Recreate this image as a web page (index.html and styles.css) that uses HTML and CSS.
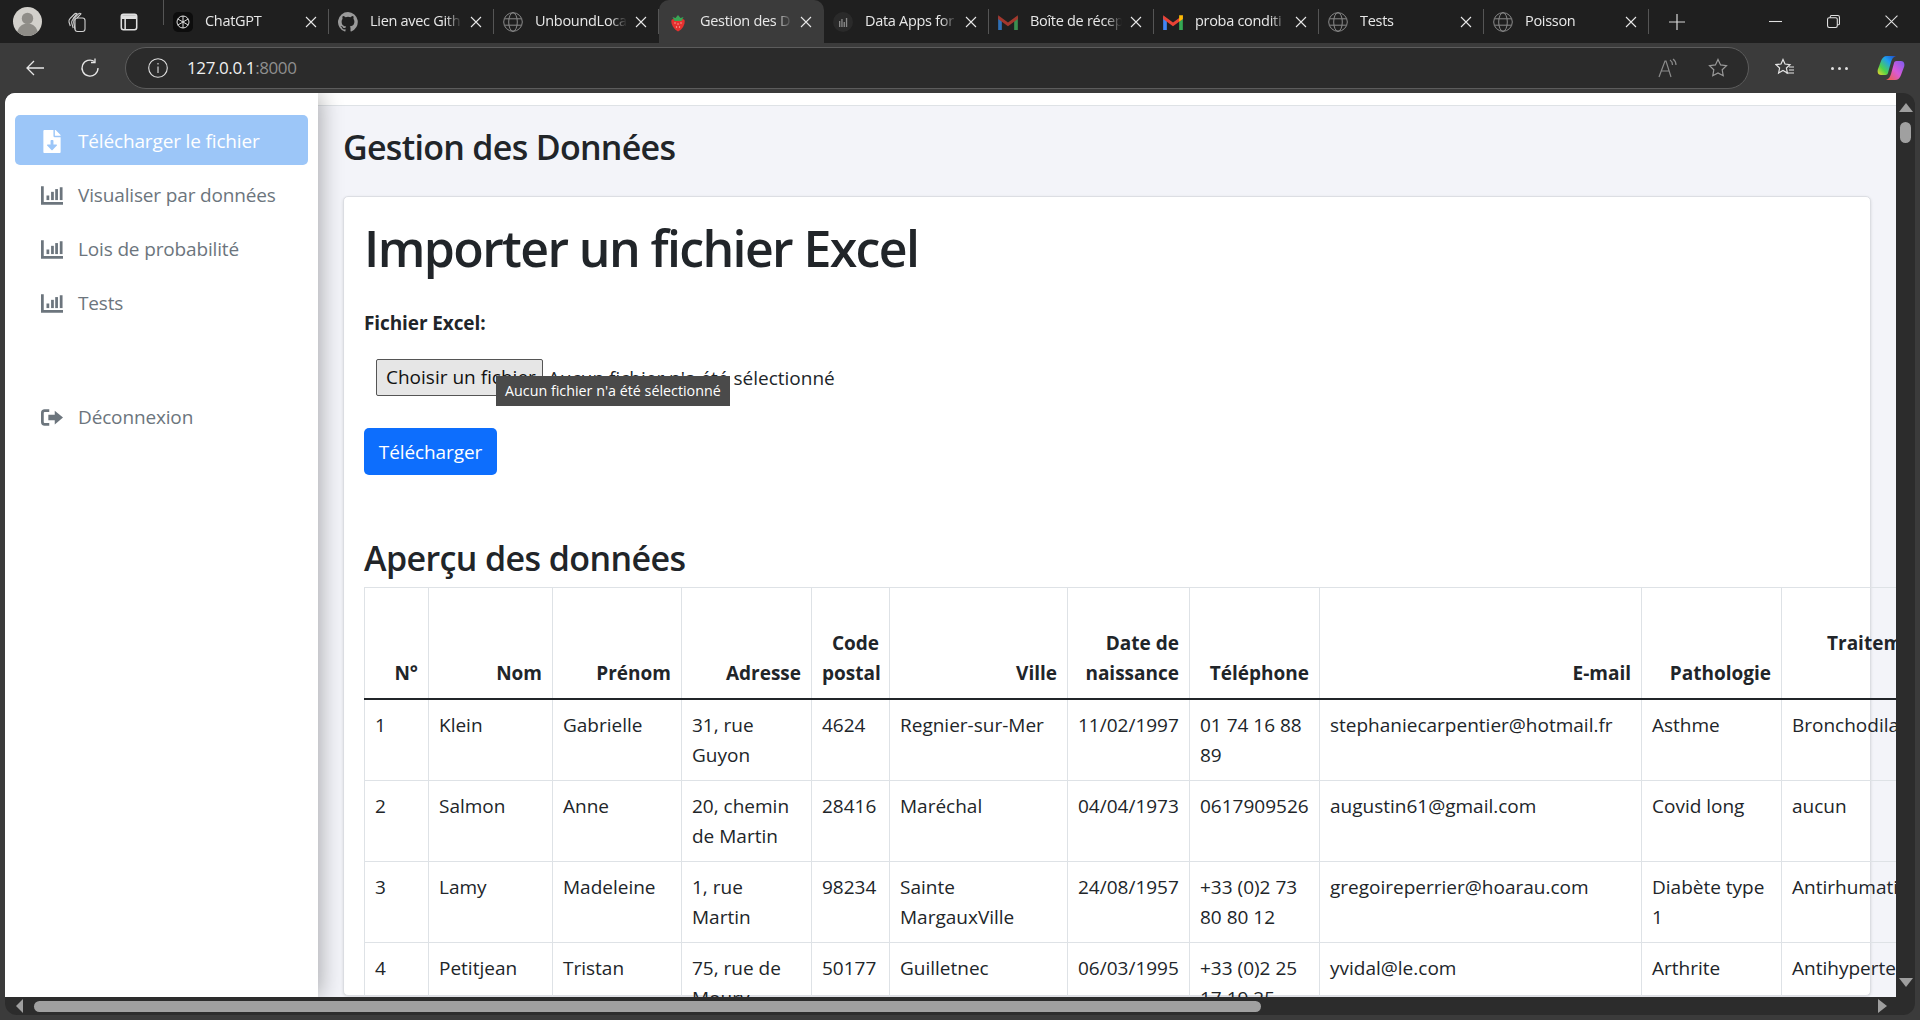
FILE: index.html
```html
<!DOCTYPE html>
<html lang="fr">
<head>
<meta charset="utf-8">
<title>Gestion des Données</title>
<link rel="stylesheet" href="styles.css">
</head>
<body>
<svg class="defs" width="0" height="0" aria-hidden="true"><defs>
  <symbol id="x" viewBox="0 0 12 12"><path d="M1 1l10 10M11 1L1 11" stroke="#e8e8e8" stroke-width="1.100" fill="none"/></symbol>
  <symbol id="globe" viewBox="0 0 20 20"><g fill="none" stroke="#8a8a8a" stroke-width="1"><circle cx="10" cy="10" r="9.300"/><ellipse cx="10" cy="10" rx="4.300" ry="9.300"/><path d="M1.500 6.800h17M1.500 13.200h17"/></g></symbol>
  <symbol id="bars" viewBox="0 0 24 20"><path d="M0 0h3v17h21v3H0z" fill="#6c757d"/><g fill="#6c757d"><rect x="6" y="10" width="3" height="5"/><rect x="11" y="6" width="3" height="9"/><rect x="15.500" y="3" width="3" height="12"/><rect x="20.500" y="1" width="3" height="14"/></g></symbol>
</defs></svg>
<div class="window">
  <div class="tabstrip">
    <div class="strip-tools">
      <svg class="avatar" viewBox="0 0 28 28"><circle cx="14" cy="14" r="14" fill="#d2d0cb"/><circle cx="14" cy="11" r="5.500" fill="#8f8d88"/><path d="M4 24c2-6 6-8 10-8s8 2 10 8a14 14 0 0 1-20 0z" fill="#8f8d88"/></svg>
      <svg class="tool" viewBox="0 0 22 22" fill="none" stroke="#d0d0d0" stroke-width="1.100"><rect x="9" y="7" width="10" height="13.500" rx="2.500"/><path d="M9 8.500c-1 .4-1.500 1.500-1.300 2.800l1.300 7"/><path d="M11 7l4-4.200c-.8-.7-1.700-.7-2.500 0L6.800 8.500C5.800 9.600 5.500 10.500 5.700 12l1.500 5"/><path d="M7 7.500l4-4.700c-.8-.6-1.700-.5-2.500.2L4 7.700C3 8.800 2.800 9.800 3 11l1.300 4"/></svg>
      <svg class="tool last" viewBox="0 0 20 20" fill="none" stroke="#e0e0e0" stroke-width="1.400"><rect x="3" y="3" width="14" height="14" rx="2"/><path d="M6.500 7v10"/><path d="M3 5.500h14" stroke-width="3.500"/></svg>
    </div>
    <div class="tab"><span class="fav dark"><svg viewBox="0 0 20 20" fill="none" stroke="#ddd" stroke-width="1"><circle cx="10" cy="10" r="6"/><path d="M10 4v12M4.800 7l10.400 6M15.200 7L4.800 13"/></svg></span><span class="tab-title">ChatGPT</span><svg class="tab-x"><use href="#x"/></svg></div>
    <div class="tab"><span class="fav"><svg viewBox="0 0 16 16" fill="#9a9a9a"><path d="M8 0a8 8 0 0 0-2.500 15.600c.4.100.5-.2.5-.4v-1.400c-2.200.5-2.700-1-2.700-1-.4-.9-.9-1.200-.9-1.200-.7-.5.100-.5.100-.5.800.100 1.200.8 1.200.8.700 1.200 1.900.9 2.300.7.100-.5.300-.9.500-1.100-1.800-.2-3.600-.9-3.600-4 0-.9.300-1.600.800-2.100-.1-.2-.4-1 .1-2.100 0 0 .7-.2 2.200.8a7.600 7.600 0 0 1 4 0c1.500-1 2.200-.8 2.200-.8.500 1.100.2 1.900.1 2.100.5.600.8 1.300.8 2.100 0 3.100-1.900 3.700-3.700 3.900.3.300.6.800.6 1.500v2.200c0 .2.100.5.600.4A8 8 0 0 0 8 0z"/></svg></span><span class="tab-title">Lien avec Gith</span><svg class="tab-x"><use href="#x"/></svg></div>
    <div class="tab"><span class="fav"><svg><use href="#globe"/></svg></span><span class="tab-title">UnboundLoca</span><svg class="tab-x"><use href="#x"/></svg></div>
    <div class="tab active"><span class="fav"><svg viewBox="0 0 16 20"><path d="M1.500 8c2-2 11-2 13 0 1 4-2 9.500-6.500 11.500C4 17.500.5 12 1.500 8z" fill="#e5312f"/><path d="M2.500 5l3 1 2.500-3 2.500 3 3-1-2 4H4.500z" fill="#3aa655"/><g fill="#ffb3a8"><circle cx="5" cy="11" r=".7"/><circle cx="8" cy="12" r=".7"/><circle cx="11" cy="11" r=".7"/><circle cx="6.500" cy="15" r=".7"/><circle cx="9.500" cy="15" r=".7"/></g></svg></span><span class="tab-title">Gestion des D</span><svg class="tab-x"><use href="#x"/></svg></div>
    <div class="tab"><span class="fav dark2"><svg viewBox="0 0 20 20" fill="#8a8a8a"><rect x="6" y="9" width="1.300" height="6"/><rect x="8.300" y="7" width="1.300" height="8"/><rect x="10.600" y="10" width="1.300" height="5"/><rect x="12.900" y="6" width="1.300" height="9"/></svg></span><span class="tab-title">Data Apps for</span><svg class="tab-x"><use href="#x"/></svg></div>
    <div class="tab"><span class="fav mail"><svg viewBox="0 0 16 13"><path d="M0 2v11h3V5z" fill="#2f6fb5"/><path d="M13 5v8h3V2z" fill="#3b8e50"/><path d="M0 1l8 6 8-6v3L8 10 0 4z" fill="#a3372d"/></svg></span><span class="tab-title">Boîte de récep</span><svg class="tab-x"><use href="#x"/></svg></div>
    <div class="tab"><span class="fav mail"><svg viewBox="0 0 16 13"><path d="M0 2v11h3V5z" fill="#4285f4"/><path d="M13 5v8h3V2z" fill="#34a853"/><path d="M0 1l8 6 8-6v3L8 10 0 4z" fill="#ea4335"/><path d="M13 1h3v3l-3 2z" fill="#fbbc04"/></svg></span><span class="tab-title">proba conditi</span><svg class="tab-x"><use href="#x"/></svg></div>
    <div class="tab"><span class="fav"><svg><use href="#globe"/></svg></span><span class="tab-title">Tests</span><svg class="tab-x"><use href="#x"/></svg></div>
    <div class="tab"><span class="fav"><svg><use href="#globe"/></svg></span><span class="tab-title">Poisson</span><svg class="tab-x"><use href="#x"/></svg></div>
    <svg class="new-tab" viewBox="0 0 16 16" stroke="#d8d8d8" stroke-width="1.200"><path d="M8 0v16M0 8h16"/></svg>
    <div class="win-controls">
      <svg viewBox="0 0 12 12" stroke="#e0e0e0" fill="none"><path d="M0 6h12"/></svg>
      <svg viewBox="0 0 12 12" stroke="#e0e0e0" fill="none"><rect x=".5" y="2.500" width="9" height="9" rx="1.500"/><path d="M3 2.500V1.500a1 1 0 0 1 1-1h6a1.500 1.500 0 0 1 1.500 1.500v6a1 1 0 0 1-1 1h-1"/></svg>
      <svg viewBox="0 0 12 12" stroke="#e0e0e0" fill="none"><path d="M.5.500l11 11M11.500.500l-11 11"/></svg>
    </div>
  </div>
  <div class="toolbar">
    <svg class="nav-ico" viewBox="0 0 20 20" fill="none" stroke="#e6e6e6" stroke-width="1.300"><path d="M19 10H2M9 3l-7 7 7 7"/></svg>
    <svg class="nav-ico reload" viewBox="0 0 20 20" fill="none" stroke="#e6e6e6" stroke-width="1.300"><path d="M14.500 3.500A8 8 0 1 0 18 10"/><path d="M15 .500v4h-4"/></svg>
    <div class="omnibox">
      <svg class="info" viewBox="0 0 20 20" fill="none" stroke="#e0e0e0" stroke-width="1.100"><circle cx="10" cy="10" r="9.300"/><path d="M10 8.500v6.500M10 5v1.500"/></svg>
      <span class="url">127.0.0.1<span class="port">:8000</span></span>
      <span class="omni-right">
        <svg class="omni-ico" viewBox="0 0 20 20" fill="none" stroke="#8b8b8b" stroke-width="1.200"><path d="M1 19L7 3h1l5 16M3.500 13h8M12 2c1.500 1 2.500 3 2.500 5M15 1c2 1.500 3 3.500 3 6"/></svg>
        <svg class="omni-ico" viewBox="0 0 20 20" fill="none" stroke="#9a9a9a" stroke-width="1.200"><path d="M10 1.500l2.600 5.400 5.900.8-4.300 4.100 1 5.900-5.200-2.800-5.200 2.800 1-5.900L1.500 7.700l5.900-.8z"/></svg>
      </span>
    </div>
    <svg class="omni-ico fav-list" viewBox="0 0 20 20" fill="none" stroke="#e6e6e6" stroke-width="1.200"><path d="M8 1.500l2 4.500 5 .6-3.600 3.400 1 5-4.400-2.500L3.600 15l1-5L1 6.600 6 6zM14 9h5M14 12h5M11 15h8"/></svg>
    <span class="dots"><i></i><i></i><i></i></span>
    <svg class="copilot" viewBox="0 0 28 26"><defs><linearGradient id="cg1" x1="1" y1="0" x2="0" y2="1"><stop offset="0" stop-color="#1f48c8"/><stop offset=".35" stop-color="#1f9df0"/><stop offset=".7" stop-color="#4ed24a"/><stop offset="1" stop-color="#f5d52a"/></linearGradient><linearGradient id="cg2" x1="1" y1="0" x2="0" y2="1"><stop offset="0" stop-color="#7a5cf0"/><stop offset=".5" stop-color="#d85ad8"/><stop offset="1" stop-color="#f0603a"/></linearGradient></defs><path d="M10 1H19C16 2 15 4 14 7L11 18C10.500 20 9 20 7 20H4C1 20 0 17 1 14L4 6C5 3 7 1 10 1Z" fill="url(#cg1)"/><path d="M18 25H9C12 24 13 22 14 19L17 8C17.500 6 19 6 21 6H24C27 6 28 9 27 12L24 20C23 23 21 25 18 25Z" fill="url(#cg2)"/></svg>
  </div>
  <div class="frame">
    <div class="content-row">
      <div class="viewport">
        <aside class="sidebar">
          <nav class="side-nav">
            <a class="side-link current"><svg class="side-ico doc" viewBox="0 0 384 512" fill="#fff"><path d="M224 136V0H24C10.700 0 0 10.700 0 24v464c0 13.300 10.700 24 24 24h336c13.300 0 24-10.700 24-24V160H248c-13.200 0-24-10.800-24-24zm76.400 211.400l-96.400 95.700c-6.600 6.600-17.300 6.600-24 0l-96.400-95.700C73.400 337.300 80.500 320 94.800 320H160v-80c0-8.800 7.200-16 16-16h32c8.800 0 16 7.200 16 16v80h65.200c14.300 0 21.400 17.300 11.200 27.400zM377 105L279.100 7c-4.500-4.500-10.600-7-17-7H256v128h128v-6.100c0-6.300-2.500-12.400-7-16.900z"/></svg><span>Télécharger le fichier</span></a>
            <a class="side-link"><svg class="side-ico"><use href="#bars"/></svg><span>Visualiser par données</span></a>
            <a class="side-link"><svg class="side-ico"><use href="#bars"/></svg><span>Lois de probabilité</span></a>
            <a class="side-link"><svg class="side-ico"><use href="#bars"/></svg><span>Tests</span></a>
            <a class="side-link logout"><svg class="side-ico" viewBox="0 0 24 20" fill="#6c757d"><path d="M15 2.500l9 7.500-9 7.500V13H8V7h7z"/><path d="M9 1H4a4 4 0 0 0-4 4v10a4 4 0 0 0 4 4h5v-3H4a1 1 0 0 1-1-1V5a1 1 0 0 1 1-1h5z"/></svg><span>Déconnexion</span></a>
          </nav>
        </aside>
        <div class="page">
          <div class="page-band"></div>
          <header class="page-head"><h2 class="page-title">Gestion des Données</h2></header>
          <section class="card">
            <h1 class="card-title">Importer un fichier Excel</h1>
            <form class="upload">
              <label class="field-label">Fichier Excel:</label>
              <div class="file-row">
                <span class="file-btn">Choisir un fichier</span>
                <span class="file-text">Aucun fichier n'a été sélectionné</span>
                <span class="tooltip">Aucun fichier n'a été sélectionné</span>
              </div>
              <button type="button" class="btn-primary">Télécharger</button>
            </form>
            <h2 class="section-title">Aperçu des données</h2>
            <table class="data">
              <thead>
                <tr><th class="c1">N°</th><th class="c2">Nom</th><th class="c3">Prénom</th><th class="c4">Adresse</th><th class="c5">Code postal</th><th class="c6">Ville</th><th class="c7">Date de naissance</th><th class="c8">Téléphone</th><th class="c9">E-mail</th><th class="c10">Pathologie</th><th class="c11"><span class="th-lift">Traitement</span></th></tr>
              </thead>
              <tbody>
                <tr><td>1</td><td>Klein</td><td>Gabrielle</td><td>31, rue Guyon</td><td>4624</td><td>Regnier-sur-Mer</td><td>11/02/1997</td><td>01 74 16 88 89</td><td>stephaniecarpentier@hotmail.fr</td><td>Asthme</td><td>Bronchodilatateur</td></tr>
                <tr><td>2</td><td>Salmon</td><td>Anne</td><td>20, chemin de Martin</td><td>28416</td><td>Maréchal</td><td>04/04/1973</td><td>0617909526</td><td>augustin61@gmail.com</td><td>Covid long</td><td>aucun</td></tr>
                <tr><td>3</td><td>Lamy</td><td>Madeleine</td><td>1, rue Martin</td><td>98234</td><td>Sainte MargauxVille</td><td>24/08/1957</td><td>+33 (0)2 73 80 80 12</td><td>gregoireperrier@hoarau.com</td><td>Diabète type 1</td><td>Antirhumatismal</td></tr>
                <tr><td>4</td><td>Petitjean</td><td>Tristan</td><td>75, rue de Moury</td><td>50177</td><td>Guilletnec</td><td>06/03/1995</td><td>+33 (0)2 25 17 19 25</td><td>yvidal@le.com</td><td>Arthrite</td><td>Antihypertenseur</td></tr>
              </tbody>
            </table>
          </section>
        </div>
      </div>
      <div class="v-scroll"><span class="arrow-up"></span><span class="v-thumb"></span><span class="arrow-down"></span></div>
    </div>
    <div class="h-scroll"><span class="arrow-left"></span><span class="h-thumb"></span><span class="arrow-right"></span></div>
  </div>
</div>
</body>
</html>
```
FILE: styles.css
```css
* { box-sizing: border-box; }
html, body { margin: 0; height: 100%; overflow: hidden; }
body { background: #3b3b3b; font-family: "Open Sans", "Noto Sans", sans-serif; color: #212529; }
.defs { position: absolute; }
.window { width: 1920px; height: 1020px; display: flex; flex-direction: column; background: #3b3b3b; }

.tabstrip { height: 43px; flex: none; background: #1f1f1f; display: flex; align-items: center; color: #e8e8e8; }
.strip-tools { width: 164px; flex: none; display: flex; align-items: center; padding-left: 13px; position: relative; }
.strip-tools::after { content: ""; position: absolute; right: 0; top: -7px; height: 25px; width: 1px; background: #555; }
.avatar { width: 29px; height: 29px; margin-right: 24px; flex: none; }
.tool { width: 22px; height: 22px; margin-right: 30px; flex: none; }
.tool.last { margin-right: 0; }
.tab { width: 165px; height: 43px; flex: none; display: flex; align-items: center; padding: 0 12px 0 9px; position: relative; }
.tab::after { content: ""; position: absolute; right: 0; top: 9px; height: 25px; width: 1px; background: #555; }
.tab.active { background: #3b3b3b; border-radius: 10px 10px 0 0; }
.tab.active::after { display: none; }
.fav { width: 20px; height: 20px; flex: none; display: flex; margin-right: 12px; }
.fav svg { width: 100%; height: 100%; }
.fav.dark { background: #0d0d0d; border-radius: 5px; }
.fav.dark2 { border-radius: 50%; background: #2a2a2a; }
.fav.mail { height: 16px; }
.tab-title { flex: 1; min-width: 0; margin: -2px 8px 0 0; overflow: hidden; white-space: nowrap; font-size: 14.500px; letter-spacing: -.3px; -webkit-mask-image: linear-gradient(90deg, #000 82%, transparent 100%); mask-image: linear-gradient(90deg, #000 82%, transparent 100%); }
.tab-x { width: 12px; height: 12px; flex: none; }
.new-tab { width: 16px; height: 16px; margin-left: 20px; flex: none; }
.win-controls { margin-left: auto; display: flex; gap: 45px; padding-right: 22px; }
.win-controls svg { width: 13px; height: 13px; }

.toolbar { height: 50px; flex: none; background: #3b3b3b; display: flex; align-items: center; padding: 0 0 0 25px; position: relative; }
.nav-ico { width: 20px; height: 20px; flex: none; margin-right: 35px; }
.nav-ico.reload { margin-right: 25px; }
.omnibox { width: 1624px; height: 42px; flex: none; border: 1px solid #5c5c5c; border-radius: 21px; background: #2b2b2b; display: flex; align-items: center; padding: 0 20px 0 22px; }
.info { width: 20px; height: 20px; margin-right: 19px; flex: none; }
.url { font-size: 17px; color: #f0f0f0; letter-spacing: -.4px; margin-top: -2px; }
.port { color: #8f8f8f; }
.omni-right { margin-left: auto; display: flex; gap: 30px; }
.omni-ico { width: 20px; height: 20px; flex: none; }
.fav-list { margin-left: 26px; }
.dots { display: flex; gap: 4px; margin-left: 36px; flex: none; }
.dots i { width: 3px; height: 3px; background: #e0e0e0; border-radius: 50%; }
.copilot { width: 28px; height: 26px; margin-left: 29px; flex: none; }

.frame { width: 1910px; height: 922px; margin-left: 5px; flex: none; background: #2c2c2c; border-radius: 10px 12px 12px 12px; overflow: hidden; display: flex; flex-direction: column; }
.content-row { height: 904px; flex: none; display: flex; }
.viewport { width: 1891px; height: 904px; overflow: hidden; display: flex; background: #f3f4f9; }
.sidebar { width: 313px; flex: none; background: #fff; padding: 22px 10px; box-shadow: 2px 0 22px rgba(0,0,0,.32); position: relative; z-index: 1; }
.side-nav { display: flex; flex-direction: column; gap: 4px; }
.side-link { height: 50px; display: flex; align-items: center; padding: 2px 0 0 26px; border-radius: 5px; font-size: 19px; letter-spacing: -.15px; color: #6c757d; }
.side-link.current { background: #9cc6f8; color: #fff; }
.side-link.logout { margin-top: 60px; }
.side-ico { width: 22px; height: 19px; margin-right: 15px; flex: none; }
.side-ico.doc { height: 23px; }

.page { flex: 1; min-width: 0; }
.page-band { height: 13px; background: #fff; border-bottom: 1px solid #dee2e6; }
.page-head { height: 90px; padding-left: 25px; display: flex; align-items: center; }
.page-title { margin: 0 0 8px; font-size: 34px; font-weight: 600; color: #212529; letter-spacing: -.7px; }
.card { margin-left: 25px; width: 1528px; height: 800px; background: #fff; border: 1px solid #dcdee3; border-radius: 5px; padding: 21px 20px 20px; box-shadow: 0 1px 3px rgba(0,0,0,.12); }
.card-title { margin: 0; font-size: 50px; line-height: 60px; font-weight: 600; letter-spacing: -1.620px; }
.upload { display: flex; flex-direction: column; align-items: flex-start; }
.field-label { margin-top: 30px; font-size: 19px; line-height: 30px; font-weight: 700; letter-spacing: -.1px; }
.file-row { margin-top: 21px; margin-left: 12px; display: flex; align-items: center; font-size: 19px; position: relative; }
.file-btn { height: 37px; width: 167px; padding-left: 9px; border: 1px solid #555; border-radius: 2px; background: #e6e6e6; line-height: 35px; color: #111; overflow: hidden; white-space: nowrap; }
.file-text { margin-left: 5px; white-space: nowrap; }
.tooltip { position: absolute; left: 120px; top: 17px; height: 30px; padding: 0 9px; background: #4a4a4a; color: #fff; font-size: 14.300px; line-height: 29px; white-space: nowrap; }
.btn-primary { margin-top: 32px; height: 47px; width: 133px; background: #0d6efd; color: #fff; border: 0; border-radius: 5px; font: inherit; font-size: 19px; letter-spacing: -.1px; }
.section-title { margin: 59px 0 5px; font-size: 34px; line-height: 48px; font-weight: 600; letter-spacing: -.6px; }
.data { border-collapse: collapse; table-layout: fixed; width: 1717px; font-size: 19px; line-height: 30px; }
.data th, .data td { border: 1px solid #dee2e6; padding: 10px; vertical-align: top; text-align: left; font-weight: 400; }
.data th { height: 111px; font-weight: 700; text-align: right; vertical-align: bottom; border-bottom: 2px solid #212529; }
.th-lift { display: block; margin-bottom: 30px; padding-left: 35px; text-align: left; }
.c1 { width: 64px; } .c2 { width: 124px; } .c3 { width: 129px; } .c4 { width: 130px; } .c5 { width: 78px; }
.c6 { width: 178px; } .c7 { width: 122px; } .c8 { width: 130px; } .c9 { width: 322px; } .c10 { width: 140px; } .c11 { width: 300px; }

.v-scroll { width: 19px; height: 904px; flex: none; display: flex; flex-direction: column; align-items: center; padding-top: 10px; }
.arrow-up { width: 0; height: 0; border: 7px solid transparent; border-top: 0; border-bottom: 9px solid #9f9f9f; }
.v-thumb { width: 11px; height: 21px; border-radius: 6px; background: #a0a0a0; margin-top: 10px; }
.arrow-down { margin-top: auto; margin-bottom: 10px; width: 0; height: 0; border: 7px solid transparent; border-bottom: 0; border-top: 9px solid #9f9f9f; }
.h-scroll { height: 18px; flex: none; display: flex; align-items: center; padding: 0 28px 0 11px; }
.arrow-left { width: 0; height: 0; border: 7px solid transparent; border-left: 0; border-right: 7px solid #9f9f9f; }
.h-thumb { width: 1227px; height: 11px; border-radius: 6px; background: #a0a0a0; margin-left: 11px; }
.arrow-right { margin-left: auto; width: 0; height: 0; border: 7px solid transparent; border-right: 0; border-left: 9px solid #9f9f9f; }
```
